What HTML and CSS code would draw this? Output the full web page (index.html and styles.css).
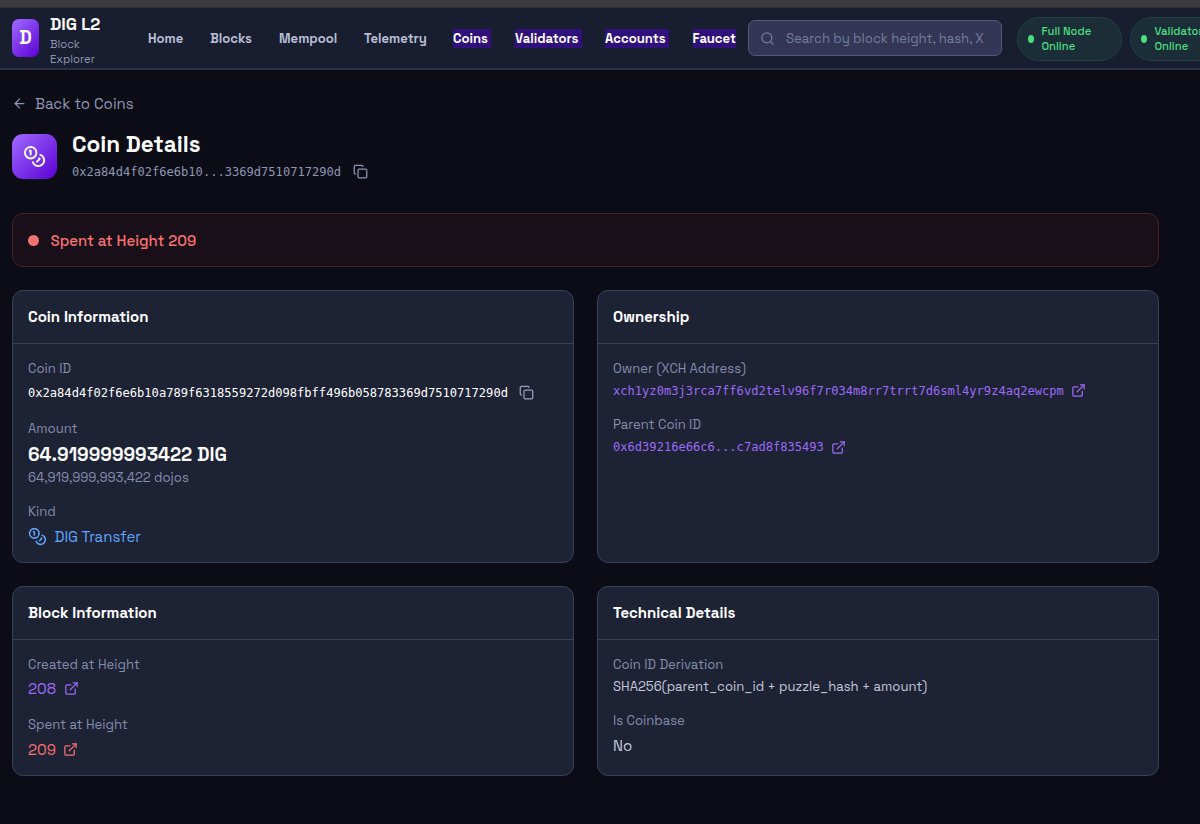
FILE: index.html
```
<!DOCTYPE html>
<html lang="en">
<head>
<meta charset="utf-8">
<title>DIG L2 Block Explorer - Coin Details</title>
<link rel="stylesheet" href="styles.css">
</head>
<body>
<svg class="sprite" aria-hidden="true">
  <symbol id="coins" viewBox="0 0 24 24"><circle cx="8" cy="8" r="6"/><path d="M18.09 10.37A6 6 0 1 1 10.34 18"/><path d="M7 6h1v4"/><path d="m16.71 13.88.7.71-2.82 2.82"/></symbol>
  <symbol id="copy" viewBox="0 0 24 24"><rect x="8" y="8" width="14" height="14" rx="2"/><path d="M4 16c-1.1 0-2-.9-2-2V4c0-1.1.9-2 2-2h10c1.1 0 2 .9 2 2"/></symbol>
  <symbol id="external" viewBox="0 0 24 24"><path d="M15 3h6v6"/><path d="M10 14 21 3"/><path d="M18 13v6a2 2 0 0 1-2 2H5a2 2 0 0 1-2-2V8a2 2 0 0 1 2-2h6"/></symbol>
  <symbol id="arrow" viewBox="0 0 24 24"><path d="m12 19-7-7 7-7"/><path d="M19 12H5"/></symbol>
  <symbol id="search" viewBox="0 0 24 24"><circle cx="11" cy="11" r="8"/><path d="m21 21-4.3-4.3"/></symbol>
</svg>
<div class="window-edge"></div>
<header class="topbar">
  <a class="brand">
    <span class="brand-mark">D</span>
    <span class="brand-text"><b class="brand-name">DIG L2</b><span class="brand-sub">Block<br>Explorer</span></span>
  </a>
  <nav class="nav">
    <a>Home</a><a>Blocks</a><a>Mempool</a><a>Telemetry</a>
    <a><mark>Coins </mark></a><a><mark>Validators </mark></a><a><mark>Accounts </mark></a><a><mark>Faucet</mark></a>
  </nav>
  <div class="search"><svg class="icon"><use href="#search"/></svg><span>Search by block height, hash, X</span></div>
  <div class="pills">
    <div class="pill"><i></i><span>Full Node<br>Online</span></div>
    <div class="pill"><i></i><span>Validator<br>Online</span></div>
  </div>
</header>
<main class="page">
  <a class="back"><svg class="icon"><use href="#arrow"/></svg><span>Back to Coins</span></a>
  <div class="title-row">
    <div class="title-icon"><svg class="icon"><use href="#coins"/></svg></div>
    <div>
      <h1>Coin Details</h1>
      <div class="hash-row"><span class="mono">0x2a84d4f02f6e6b10...3369d7510717290d</span><svg class="icon"><use href="#copy"/></svg></div>
    </div>
  </div>
  <div class="banner"><i></i><span>Spent at Height 209</span></div>
  <div class="grid">
    <section class="card">
      <h2>Coin Information</h2>
      <div class="card-body">
        <div class="field"><div class="label">Coin ID</div><div class="value tall copyable"><span class="mono bright">0x2a84d4f02f6e6b10a789f6318559272d098fbff496b058783369d7510717290d</span><svg class="icon"><use href="#copy"/></svg></div></div>
        <div class="field"><div class="label">Amount</div><div class="amount">64.919999993422 DIG</div><div class="label">64,919,999,993,422 dojos</div></div>
        <div class="field"><div class="label">Kind</div><div class="value tall blue kind"><svg class="icon"><use href="#coins"/></svg><span>DIG Transfer</span></div></div>
      </div>
    </section>
    <section class="card">
      <h2>Ownership</h2>
      <div class="card-body">
        <div class="field"><div class="label">Owner (XCH Address)</div><div class="value purple"><span class="mono">xch1yz0m3j3rca7ff6vd2telv96f7r034m8rr7trrt7d6sml4yr9z4aq2ewcpm</span><svg class="icon"><use href="#external"/></svg></div></div>
        <div class="field"><div class="label">Parent Coin ID</div><div class="value purple"><span class="mono">0x6d39216e66c6...c7ad8f835493</span><svg class="icon"><use href="#external"/></svg></div></div>
      </div>
    </section>
    <section class="card">
      <h2>Block Information</h2>
      <div class="card-body">
        <div class="field"><div class="label">Created at Height</div><div class="value tall purple"><span>208</span><svg class="icon"><use href="#external"/></svg></div></div>
        <div class="field"><div class="label">Spent at Height</div><div class="value tall red"><span>209</span><svg class="icon"><use href="#external"/></svg></div></div>
      </div>
    </section>
    <section class="card">
      <h2>Technical Details</h2>
      <div class="card-body">
        <div class="field"><div class="label">Coin ID Derivation</div><div class="value formula">SHA256(parent_coin_id + puzzle_hash + amount)</div></div>
        <div class="field"><div class="label">Is Coinbase</div><div class="value tall">No</div></div>
      </div>
    </section>
  </div>
</main>
</body>
</html>
```
FILE: styles.css
```
* { box-sizing: border-box; }
body {
  margin: 0;
  width: 1200px;
  height: 824px;
  overflow: hidden;
  background: #0b0c15;
  color: #c3c7dc;
  font-family: "Space Grotesk", Inter, sans-serif;
  font-size: 15px;
}
h1, h2 { margin: 0; }
.sprite { display: none; }
.icon {
  width: 15px;
  height: 15px;
  flex: none;
  fill: none;
  stroke: currentColor;
  stroke-width: 2;
  stroke-linecap: round;
  stroke-linejoin: round;
}

.window-edge { height: 8px; background: #3b3b3c; border-bottom: 1px solid #2e3039; }
.topbar {
  height: 62px;
  display: flex;
  align-items: center;
  padding-left: 12px;
  background: #191d30;
  border-bottom: 2px solid #2d3044;
}
.brand { display: flex; align-items: center; width: 136px; flex: none; }
.brand-mark {
  width: 27px;
  height: 38px;
  margin-right: 11px;
  border-radius: 7px;
  background: linear-gradient(135deg, #a06bff, #5b00d6);
  color: #fff;
  font-weight: 700;
  font-size: 18.75px;
  line-height: 38px;
  text-align: center;
}
.brand-text { display: flex; flex-direction: column; padding-top: 3px; }
.brand-name { color: #fff; font-size: 16.9px; line-height: 25px; }
.brand-sub { color: #8d93b3; font-size: 11.25px; line-height: 15px; }
.nav {
  display: grid;
  grid-template-columns: 62px 69px 85px 89px 62px 90px 87.5px 55.5px;
  flex: none;
  font-size: 13.125px;
  font-weight: 600;
  line-height: 19px;
  color: #b9bdd6;
}
.nav mark { display: inline-block; white-space: pre; background: #30107a; color: #fff; }
.search {
  flex: none;
  width: 254px;
  height: 36px;
  display: flex;
  align-items: center;
  gap: 11.5px;
  padding-left: 10.5px;
  border: 1px solid #535878;
  border-radius: 7px;
  background: #333654;
  color: #777d9f;
  font-size: 13.125px;
  white-space: nowrap;
}
.pills { display: flex; gap: 8px; margin-left: 14.5px; padding-top: 1px; flex: none; }
.pill {
  width: 105px;
  height: 44px;
  display: flex;
  align-items: center;
  gap: 7.5px;
  padding: 1px 0 0 10.5px;
  border: 1px solid #1f4340;
  border-radius: 22px;
  background: #1b2d36;
  color: #4ade80;
  font-size: 11.25px;
  font-weight: 500;
  line-height: 15px;
  white-space: nowrap;
}
.pill i { width: 6px; height: 8px; border-radius: 50%; background: #4ade80; }

.page { padding: 22px 41px 0 12px; }
.back { display: flex; align-items: center; gap: 8px; height: 23px; color: #8f96b5; }
.title-row { display: flex; gap: 15px; margin-top: 15px; height: 60px; }
.title-icon {
  width: 45px;
  height: 45px;
  margin-top: 4px;
  display: grid;
  place-items: center;
  border-radius: 11px;
  background: linear-gradient(135deg, #a06bff, #5b00d6);
  color: #fff;
}
.title-icon .icon { width: 23px; height: 23px; }
h1 { color: #fff; font-size: 22.5px; line-height: 30px; }
.hash-row { display: flex; align-items: center; gap: 12px; height: 23px; color: #8f96b5; }
.mono { font-family: "DejaVu Sans Mono", monospace; font-size: 12.08px; }
.banner {
  display: flex;
  align-items: center;
  gap: 11.5px;
  height: 54px;
  margin-top: 23px;
  padding-left: 15px;
  border: 1px solid #47202b;
  border-radius: 11px;
  background: #180f19;
  color: #f87171;
  font-weight: 500;
}
.banner i { width: 11px; height: 11px; border-radius: 50%; background: currentColor; }
.grid { display: grid; grid-template-columns: 1fr 1fr; gap: 23px; margin-top: 23px; }
.card { border: 1px solid #3b4059; border-radius: 11px; background: #1e2235; overflow: hidden; }
.card h2 {
  height: 53px;
  padding-left: 15px;
  border-bottom: 1px solid #3b4059;
  color: #fff;
  font-size: 15px;
  font-weight: 600;
  line-height: 52px;
}
.card-body { display: flex; flex-direction: column; gap: 15px; padding: 14.5px 15px; }
.label { color: #858cac; font-size: 13.125px; line-height: 19px; }
.value { display: flex; align-items: center; gap: 7.5px; height: 18.5px; margin-top: 4px; }
.tall { height: 22.5px; }
.copyable { gap: 11px; color: #9aa0bd; }
.kind .icon { width: 19px; height: 19px; }
.formula { font-size: 13.125px; }
.amount { margin-top: 4px; color: #fff; font-size: 18.75px; font-weight: 700; line-height: 26px; }
.bright { color: #fff; }
.purple { color: #9b6bf5; }
.blue { color: #60a5fa; }
.red { color: #f87171; }
```
